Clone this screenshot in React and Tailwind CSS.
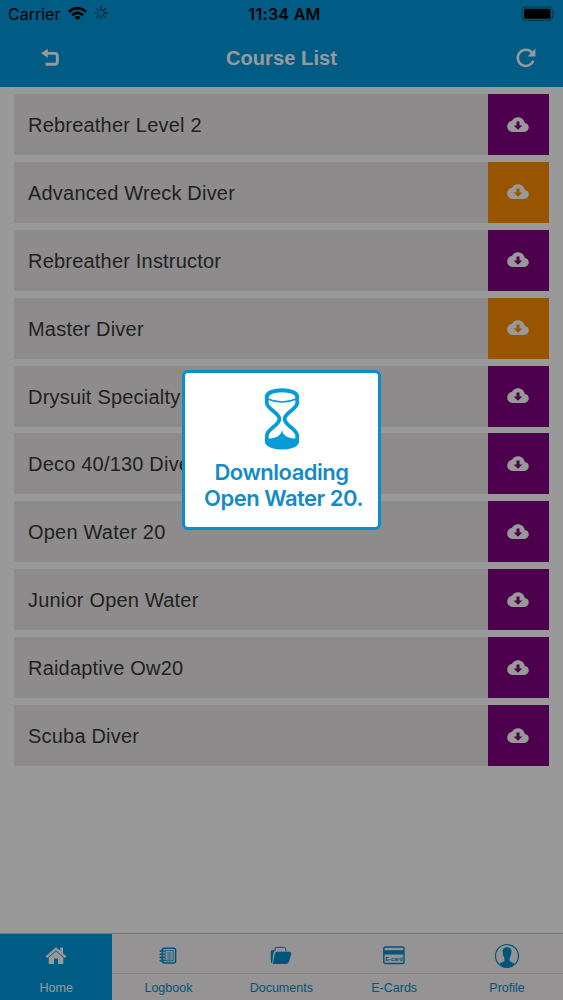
import React from 'react';

const courses = [
  { name: 'Rebreather Level 2', update: false },
  { name: 'Advanced Wreck Diver', update: true },
  { name: 'Rebreather Instructor', update: false },
  { name: 'Master Diver', update: true },
  { name: 'Drysuit Specialty', update: false },
  { name: 'Deco 40/130 Diver', update: false },
  { name: 'Open Water 20', update: false },
  { name: 'Junior Open Water', update: false },
  { name: 'Raidaptive Ow20', update: false },
  { name: 'Scuba Diver', update: false },
];

const BackIcon = () => (
  <svg width="20" height="20" viewBox="0 0 20 20" fill="none">
    <path d="M6 5.4H14.8Q17.3 5.4 17.3 7.9V13.8Q17.3 16.3 14.8 16.3H5.6" stroke="currentColor" strokeWidth="2.9" />
    <path d="M1 5.2L7.8.8V9.8Z" fill="currentColor" />
  </svg>
);

const RefreshIcon = () => (
  <svg width="22" height="22" viewBox="0 0 22 22" fill="none">
    <path d="M16.8 5.6A8 8 0 1 0 18.3 13.6" stroke="currentColor" strokeWidth="2.5" />
    <path d="M20.4 1.6V9.4H12.6Z" fill="currentColor" />
  </svg>
);

const CloudIcon = () => (
  <svg width="22" height="16" viewBox="0 0 22 16">
    <path
      fillRule="evenodd"
      fill="currentColor"
      d="M17.8 6C17.2 2.7 14.4.3 11 .3 8.3.3 6 1.8 4.8 4.1 2.1 4.4.2 6.6.2 9.4c0 3.1 2.4 5.5 5.4 5.5h11.7c2.5 0 4.5-2 4.5-4.6 0-2.3-1.7-4.2-4-4.3ZM9.5 4.6h3v3.8h2.8L11 12.8 6.7 8.4h2.8Z"
    />
  </svg>
);

const WifiIcon = () => (
  <svg width="19" height="14" viewBox="0 0 19 14" fill="none" stroke="currentColor" strokeWidth="2.7">
    <path d="M1 4.8Q9.5-2.5 18 4.8" />
    <path d="M4 8.2Q9.5 3.4 15 8.2" />
    <path d="M6.4 10.2Q9.5 7.6 12.6 10.2L9.5 13.3Z" fill="currentColor" stroke="none" />
  </svg>
);

const SpinnerIcon = () => (
  <svg width="14" height="14" viewBox="0 0 14 14" stroke="currentColor" strokeWidth="1.4" strokeLinecap="round">
    <path d="M7 1V4M11.2 2.8L9.1 4.9M13 7H10" opacity=".7" />
    <path d="M11.2 11.2L9.1 9.1M7 13V10M2.8 11.2L4.9 9.1" opacity=".5" />
    <path d="M1 7H4M2.8 2.8L4.9 4.9" opacity=".35" />
  </svg>
);

const BatteryIcon = () => (
  <svg width="36" height="16" viewBox="0 0 36 16">
    <rect x="1" y="1" width="30.5" height="13.5" rx="3.5" fill="none" stroke="currentColor" strokeWidth="1" opacity=".4" />
    <rect x="3" y="2.7" width="26.5" height="10" rx="1" fill="currentColor" />
    <path d="M33 5.5Q35 7.7 33 10Z" fill="currentColor" opacity=".4" />
  </svg>
);

const HourglassIcon = () => (
  <svg width="36" height="62" viewBox="0 0 36 62" fill="none" stroke="#079bd8" strokeWidth="3.8">
    <path d="M2.8 8V15C2.8 21 15.4 24.5 15.4 31S2.8 41 2.8 47.5V54C5 61.5 31 61.5 33.2 54V47.5C33.2 41 20.6 37.5 20.6 31S33.2 21 33.2 15V8" />
    <path d="M2.8 9C2.8 0 33.2 0 33.2 9" strokeWidth="4" />
    <path d="M2.5 10.5Q18 17.5 33.5 10.5" strokeWidth="1.6" />
    <path d="M3 50.5C9 51 17 49 18 42C19 49 27 51 33 50.5V55C29 61 7 61 3 55Z" fill="#079bd8" stroke="none" />
  </svg>
);

const HomeIcon = () => (
  <svg width="22" height="18" viewBox="0 0 22 18" fill="currentColor">
    <path d="M11 .2L21.5 9.2 20 11 11 3.4 2 11 .5 9.2Z" />
    <path d="M15.2.6H18V7L15.2 4.5ZM11 4.5L18.3 10.6V17H13V11.6H9V17H3.7V10.6Z" />
  </svg>
);

const LogbookIcon = () => (
  <svg width="18" height="18" viewBox="0 0 18 18" fill="none" stroke="currentColor">
    <rect x="3.3" y="1.3" width="13.3" height="14.8" rx="2" strokeWidth="1.5" />
    <path d="M6.2 3.6H14.2V13.8H6.2ZM8.2 6H12.4M8.2 8H12.4M8.2 10H12.4M8.2 12H12.4" strokeWidth=".9" />
    <path d="M1.2 4H5M1.2 7.2H5M1.2 10.4H5M1.2 13.6H5" strokeWidth="1.6" strokeLinecap="round" />
  </svg>
);

const DocumentsIcon = () => (
  <svg width="22" height="19" viewBox="0 0 22 19">
    <path d="M5 5V2.6Q5 1.4 6.2 1.4H14.3Q15.4 1.4 15.6 2.6L16.1 5.5" fill="none" stroke="currentColor" strokeWidth="1" />
    <path d="M2.5 4H4.6L3.2 8 2.2 17.6Q.7 17 .8 14.8V6Q.8 4 2.5 4Z" fill="currentColor" />
    <path d="M7 5.8H19.6Q21.6 5.8 21.2 8L19 15.5Q18.2 18 15.6 18H2.8L4.8 7.8Q5.2 5.8 7 5.8Z" fill="currentColor" />
  </svg>
);

const CardsIcon = () => (
  <svg width="22" height="19" viewBox="0 0 22 19">
    <rect x=".8" y="1" width="20.2" height="16.5" rx="1.5" fill="none" stroke="currentColor" strokeWidth="1.4" />
    <path d="M1 4.2H21V8.5H1Z" fill="currentColor" />
    <text x="11" y="15" textAnchor="middle" fontSize="5.6" fontWeight="700" fill="currentColor" fontFamily="Liberation Sans, sans-serif">
      E-card
    </text>
  </svg>
);

const ProfileIcon = () => (
  <svg width="26" height="26" viewBox="0 0 26 26">
    <circle cx="13" cy="13" r="11.5" fill="none" stroke="currentColor" strokeWidth="1.2" />
    <path
      fill="currentColor"
      d="M13 4.2C10 4.2 8.3 6 8.6 9L9.2 12.5Q10 14.5 10.5 15.5V18L5.3 20.8Q8.2 24.5 13 24.5T20.7 20.8L15.5 18V15.5Q16 14.5 16.8 12.5L17.4 9C17.7 6 16 4.2 13 4.2Z"
    />
  </svg>
);

const tabs = [
  { label: 'Home', Icon: HomeIcon, active: true },
  { label: 'Logbook', Icon: LogbookIcon },
  { label: 'Documents', Icon: DocumentsIcon },
  { label: 'E-Cards', Icon: CardsIcon },
  { label: 'Profile', Icon: ProfileIcon },
];

const Header = () => (
  <header className="h-[87px] bg-[#0099dd]">
    <div className="flex h-7 items-center justify-between pl-2 pr-1.5 font-['Inter',sans-serif] text-black">
      <div className="flex flex-1 items-center">
        <span className="text-[16px]">Carrier</span>
        <span className="ml-2"><WifiIcon /></span>
        <span className="mb-0.5 ml-[7px]"><SpinnerIcon /></span>
      </div>
      <span className="pl-1 text-[16px] font-semibold tracking-[0.3px]">11:34 AM</span>
      <div className="flex flex-1 justify-end">
        <BatteryIcon />
      </div>
    </div>
    <div className="grid h-[59px] grid-cols-[60px_1fr_60px] items-center text-white">
      <div className="flex justify-end">
        <BackIcon />
      </div>
      <h1 className="pt-px text-center text-[20px] font-bold tracking-[0.1px]">Course List</h1>
      <div className="pl-3">
        <RefreshIcon />
      </div>
    </div>
  </header>
);

const App = () => {
  return (
    <div className="relative flex h-[1000px] w-[563px] flex-col overflow-hidden bg-white font-['Liberation_Sans',sans-serif]">
      <Header />

      <ul className="flex flex-1 flex-col gap-[6.9px] px-3.5 pt-[7px]">
        {courses.map((course) => (
          <li key={course.name} className="flex h-[61px] bg-[#ebe8ea]">
            <span className="flex flex-1 items-center pl-3.5 pt-px text-[20px] tracking-[0.2px] text-[#383838]">
              {course.name}
            </span>
            <button
              className={`flex w-[61.5px] items-center justify-center text-white ${
                course.update ? 'bg-[#ff8c00]' : 'bg-[#800080]'
              }`}
            >
              <CloudIcon />
            </button>
          </li>
        ))}
      </ul>

      <nav className="grid h-[67px] grid-cols-[111.5px_repeat(4,1fr)] border-t border-[#c8c5c8] bg-[#f8f5f7]">
        {tabs.map(({ label, Icon, active }) => (
          <div
            key={label}
            className={`flex flex-col ${active ? 'bg-[#0099dd] text-white' : 'text-[#008fca]'}`}
          >
            <div
              className={`flex h-10 items-center justify-center border-b pt-1 ${
                active ? 'border-[#0894d2]' : 'border-[#dddadd]'
              }`}
            >
              <Icon />
            </div>
            <span className="pl-px pt-[5px] text-center text-[12.5px] leading-[18px]">{label}</span>
          </div>
        ))}
      </nav>

      <div className="absolute inset-0 bg-black/40" />
      <div className="absolute left-[182px] top-[370px] flex h-[160px] w-[199px] flex-col items-center rounded-md border-[3px] border-[#078ecb] bg-white pt-[15px]">
        <HourglassIcon />
        <p className="mt-[9px] text-center font-['Inter',sans-serif] text-[22px] font-semibold leading-[26px] tracking-[-0.5px] text-[#158bc5]">
          Downloading
          <br />
          <span className="pl-1">Open Water 20.</span>
        </p>
      </div>
    </div>
  );
};

export default App;
